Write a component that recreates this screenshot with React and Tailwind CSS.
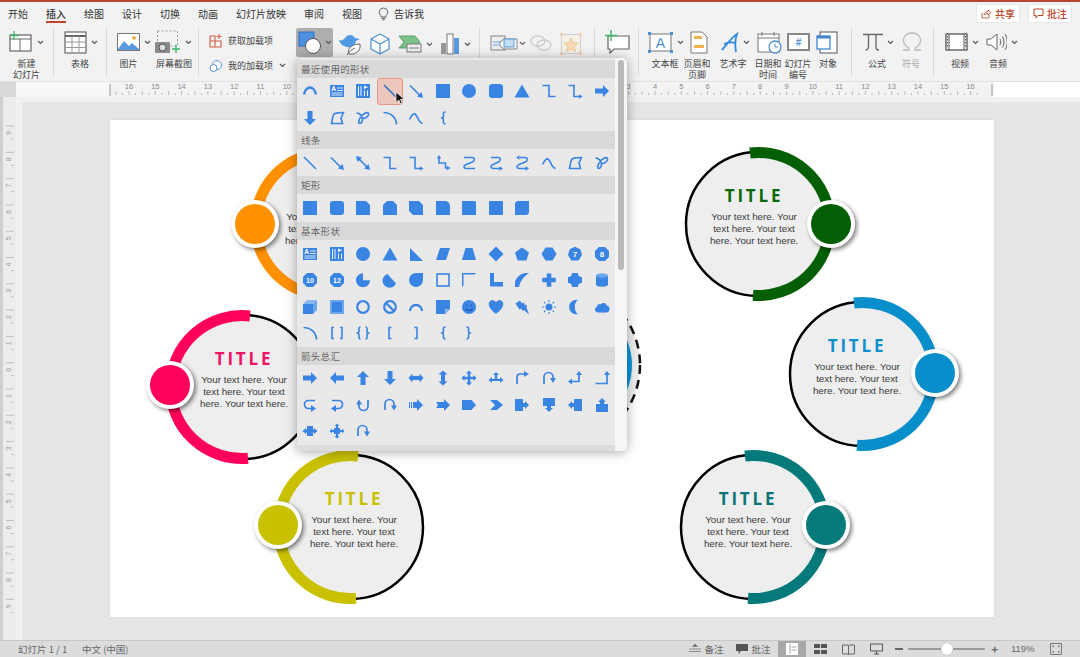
import React from 'react';

const line = (d, w = 1.3) => <path d={d} fill="none" stroke="currentColor" strokeWidth={w * 1.15} />;
const fill = (d) => <path d={d} />;
const rot = (deg, el) => <g transform={`rotate(${deg} 8 8)`}>{el}</g>;
const flipX = (el) => <g transform="matrix(-1 0 0 1 16 0)">{el}</g>;
const num = (n) => <text x="8" y="10.6" textAnchor="middle" fontSize={n.length > 1 ? 7 : 8} fontWeight="700" fill="#fff" fontFamily="Liberation Sans">{n}</text>;

const octagon = 'M5 1h6l4 4v6l-4 4H5l-4-4V5z';
const rArrow = 'M1 5.5h8V2l6 6-6 6v-3.5H1z';
const callout = 'M1 2h8v4h2V4l4 4-4 4v-2H9v4H1z';
const lrArrow = 'M.5 8l4-4.5V6h7V3.5l4 4.5-4 4.5V10h-7v2.5z';
const brace = 'M10.5 2C7.5 2 8.5 4.5 8.5 6S7.5 8 6 8c1.5 0 2.5.5 2.5 2s-1 4 2 4';
const curveHook = <>{line('M13 3.5H6.5a4 4 0 0 0 0 8H10', 1.5)}{fill('M9 8l5 3.5-5 3.5z')}</>;
const curveDown = <>{line('M3 13V7a4.5 4.5 0 0 1 9 0v2', 1.5)}{fill('M9 8.5h6l-3 5z')}</>;

const shapes = {
    arc: line('M2 11.5C3 6.5 6 4.5 8 4.5s5 2 6 7', 2),
    textH: <><rect x="1" y="2" width="14" height="12" /><path d="M8 5h6M8 7.5h6M2.5 10h11M2.5 12h11" stroke="#fff" strokeWidth="0.8" /><text x="2.2" y="8" fontSize="6.5" fontWeight="700" fill="#fff" fontFamily="Liberation Sans">A</text></>,
    textV: <><rect x="1" y="1" width="14" height="14" /><path d="M3.5 3v10M6 3v10M9.5 7.5v5.5M12.5 7.5v5.5" stroke="#fff" strokeWidth="0.9" /><path d="M9 2.5l4 1.7-4 1.7z" fill="#fff" /></>,
    line: line('M2 2l12 12', 1.4),
    arrowLine: <>{line('M2 2.5l10.5 10.5', 1.4)}{fill('M15 15l-6-1.4 4.6-4.6z')}</>,
    dblArrow: <>{line('M4 4l8 8', 1.5)}{fill('M15 15l-6-1.4 4.6-4.6z')}{fill('M1 1l6 1.4L2.4 7z')}</>,
    rect: <rect x="1" y="1" width="14" height="14" />,
    circle: <circle cx="8" cy="8" r="7" />,
    rrect: <rect x="1" y="1" width="14" height="14" rx="3" />,
    tri: fill('M8 1.5l7.5 13H.5z'),
    elbow: line('M1.5 2.5H8v11h6.5', 1.4),
    elbowArrow: <>{line('M1.5 2.5H7v11h6', 1.4)}{fill('M15.5 13.5l-3.5-2.2v4.4z')}</>,
    elbowDbl: <>{line('M4 3v5h6.5v5H13', 1.4)}{fill('M4 0l2.2 3.5H1.8z')}{fill('M15.5 13l-3.5-2.2v4.4z')}</>,
    curved: line('M3 2.5h8c3 0 3 3.5.5 4.5l-6.5 2.5C2 11 2.5 13.5 5.5 13.5H14', 1.4),
    curvedArrow: <>{line('M3 2.5h7c3 0 3 3.5.5 4.5L5 9.5C2 11 2.5 13.5 5.5 13.5H12', 1.4)}{fill('M15 13.5l-3.5-2.2v4.4z')}</>,
    curvedDbl: <>{line('M6 2.5h5c3 0 3 3.5.5 4.5L5 9.5C2 11 2.5 13.5 5.5 13.5H12', 1.4)}{fill('M15 13.5l-3.5-2.2v4.4z')}{fill('M2 2.5l3.5-2.2v4.4z')}</>,
    curve: line('M1.5 9.5C4 4.5 6 2.5 8 5s3 8 6.5 8.5', 1.4),
    freeform: line('M2.5 13.5L4 6C4.5 3 8 2.5 14.5 2.5L12 8l1.5 5.5z', 1.4),
    scribble: line('M1.5 3c3.5 0 6 3.5 6 6.5s-2.5 5-3.5 3.5S5 6 9.500 3.5s5 1 3 3-4 2.500-5.500 1.500', 1.4),
    quarter: line('M1.5 2.5c7 0 13 5 13 12', 1.5),
    lbrace: line(brace, 1.4),
    rbrace: flipX(line(brace, 1.4)),
    r1: <rect x="1" y="1" width="14" height="14" rx="1" />,
    r2: <rect x="1" y="1" width="14" height="14" rx="2" />,
    snip1: fill('M1 1h10l4 4v10H1z'),
    snip2: fill('M5 1h6l4 4v10H1V5z'),
    snipD: fill('M1 1h10l4 4v10H5l-4-4z'),
    round1: fill('M1 1h9a5 5 0 0 1 5 5v9H1z'),
    round2: fill('M1 1h13l1 1v13H1z'),
    roundD: fill('M3 1h12v12l-2 2H1V3z'),
    rtTri: fill('M2 2l13 13H2z'),
    parallel: fill('M5 2h10l-4 12H1z'),
    trap: fill('M4.5 2h7L15 14H1z'),
    diamond: fill('M8 .5L15.5 8 8 15.5.5 8z'),
    pentagon: fill('M8 1.5l7 5-2.6 8H3.6L1 6.5z'),
    hexagon: fill('M4.5 1.5h7L15.5 8l-4 6.5h-7L.5 8z'),
    hept: <>{fill('M8 .8l5.3 2.5 1.7 5.6-3.4 5.6H4.4L1 8.9l1.7-5.6z')}{num('7')}</>,
    oct: <>{fill(octagon)}{num('8')}</>,
    dec: <>{fill(octagon)}{num('10')}</>,
    dodec: <>{fill(octagon)}{num('12')}</>,
    pie: fill('M8 1.2A7 7 0 1 0 15 8.2H8z'),
    chord: fill('M5.5 2L14 11.5A7 7 0 1 1 5.5 2z'),
    tear: fill('M15 1v7a7 7 0 1 1-7-7z'),
    frame: <rect x="2" y="2" width="12" height="12" fill="none" stroke="currentColor" strokeWidth="1.6" />,
    halfFrame: fill('M1 1h14l-1.5 1.5H2.5v11L1 15z'),
    lShape: fill('M2 1h4v9h9v4.5H2z'),
    stripe: fill('M1 15V9.5C3 5 6 2 11 1h4C9 5 6 10 5 15z'),
    plus: fill('M5.7 1.5h4.6v4.2h4.5v4.6h-4.5v4.5H5.7v-4.5H1.2V5.7h4.5z'),
    plaque: fill('M5 1h6a4 4 0 0 0 4 4v6a4 4 0 0 0-4 4H5a4 4 0 0 0-4-4V5a4 4 0 0 0 4-4z'),
    can: <>{fill('M2 3.5h12v9c0 3-12 3-12 0z')}<ellipse cx="8" cy="3.5" rx="6" ry="2.2" fill="#6ea6ea" /></>,
    cube: <>{fill('M1 5h10v10H1z')}<path d="M1 5l4-4h10l-4 4z" fill="#8ab6ef" /><path d="M11 5l4-4v10l-4 4z" fill="#6ea6ea" /></>,
    bevel: <><rect x="1" y="1" width="14" height="14" fill="#6ea6ea" /><rect x="3" y="3" width="10" height="10" /></>,
    donut: <circle cx="8" cy="8" r="5.8" fill="none" stroke="currentColor" strokeWidth="2.2" />,
    noSym: <><circle cx="8" cy="8" r="5.8" fill="none" stroke="currentColor" strokeWidth="2.2" />{line('M4 4l8 8', 2)}</>,
    blockArc: line('M2 12a6 6 0 0 1 12 0', 2),
    fold: <>{fill('M1 1h14v9l-5 5H1z')}<path d="M15 10h-5v5z" fill="#8ab6ef" /></>,
    smiley: <><circle cx="8" cy="8" r="7" /><path d="M5.5 5.5v1.5M10.5 5.5v1.5M4.5 10c2 2 5 2 7 0" fill="none" stroke="#1c56a3" strokeWidth="1.1" /></>,
    heart: fill('M8 15C3 11 .8 8 .8 5a3.8 3.8 0 0 1 7.2-1.7A3.8 3.8 0 0 1 15.2 5c0 3-2.2 6-7.2 10z'),
    bolt: fill('M1.5 4.5L6 1.5l2 3 2-1 1 3 2-1-.5 3 2.5 7-5-4.5-1.5 1-1-2.5-2 1z'),
    sun: <><circle cx="8" cy="8" r="3.5" />{line('M8 1v2M8 13v2M1 8h2M13 8h2M3 3l1.4 1.4M11.6 11.6L13 13M13 3l-1.4 1.4M4.4 11.6L3 13', 1)}</>,
    moon: fill('M11 1a7.2 7.2 0 1 0 0 14C7 13 6.5 3 11 1z'),
    cloud: fill('M3.8 13.5A3 3 0 0 1 2.8 7.7a3 3 0 0 1 4-2.5 3.5 3.5 0 0 1 6 1.3 3.6 3.6 0 0 1 0 7z'),
    brackets: line('M5 2.5H3v11h2M11 2.5h2v11h-2', 1.4),
    braces: line('M5.5 2C3.5 2 4 4.5 4 6S3 8 1.5 8C3 8 4 8.5 4 10s-.5 4 1.5 4M10.5 2c2 0 1.5 2.5 1.5 4s1 2 2.5 2c-1.5 0-2.5.5-2.5 2s.5 4-1.5 4', 1.4),
    lbracket: line('M9.5 2.5H7v11h2.5', 1.4),
    rbracket: line('M6.5 2.5H9v11H6.5', 1.4),
    aRight: fill(rArrow),
    aLeft: rot(180, fill(rArrow)),
    aUp: rot(270, fill(rArrow)),
    aDown: rot(90, fill(rArrow)),
    aLR: fill(lrArrow),
    aUD: rot(90, fill(lrArrow)),
    aQuad: fill('M8 .5l3 3H9.2v3.3h3.3V5l3 3-3 3V9.2H9.2v3.3H11l-3 3-3-3h1.8V9.2H3.5V11l-3-3 3-3v1.8h3.3V3.5H5z'),
    aLRU: fill('M8 2l3 3H9.2v4H12V7l3.5 3-3.500 3v-2H4v2L.5 10 4 7v2h2.800V5H5z'),
    aBent: <>{line('M3 14V7c0-2 1-3 3-3h5', 1.5)}{fill('M10 1l5 3-5 3z')}</>,
    aUturn: <>{line('M3 14V7a4.5 4.5 0 0 1 9 0v2', 1.5)}{fill('M9 8h6l-3 5z')}</>,
    aLeftUp: <>{line('M12 4v7.5H4', 1.5)}{fill('M9 5l3-4 3 4z')}{fill('M5 8.5L1 11.5l4 3z')}</>,
    aBentUp: <>{line('M1.5 13.5H13V4', 1.5)}{fill('M10 5l3-4 3 4z')}</>,
    hookR: curveHook,
    hookL: flipX(curveHook),
    hookU: rot(180, curveDown),
    hookD: curveDown,
    striped: fill('M1 5h1v6H1zM3 5h1v6H3zM5 5h4V2l6 6-6 6v-3H5z'),
    notched: fill('M1 5h8V2l6 6-6 6v-3H1l2-3z'),
    home: fill('M1 3h9.5L15 8l-4.5 5H1z'),
    chevron: fill('M2 3h7l6 5-6 5H2l5-5z'),
    calloutR: fill(callout),
    calloutD: rot(90, fill(callout)),
    calloutL: rot(180, fill(callout)),
    calloutU: rot(270, fill(callout)),
    calloutLR: fill('M5 3h6v3.5h1V5l3.5 3L12 11V9.5h-1V13H5V9.5H4V11L.5 8 4 5v1.5h1z'),
    calloutQ: fill('M8 .5L10.5 3H9v2h2v2h2V5.5L15.5 8 13 10.5V9h-2v2H9v2h1.5L8 15.5 5.5 13H7v-2H5V9H3v1.5L.5 8 3 5.5V7h2V5h2V3H5.5z'),
    circular: curveDown,
};

const sections = [
    { title: '最近使用的形状', pad: '', items: ['arc', 'textH', 'textV', 'line', 'arrowLine', 'rect', 'circle', 'rrect', 'tri', 'elbow', 'elbowArrow', 'aRight', 'aDown', 'freeform', 'scribble', 'quarter', 'curve', 'lbrace'] },
    { title: '线条', pad: 'pt-[0.5px]', items: ['line', 'arrowLine', 'dblArrow', 'elbow', 'elbowArrow', 'elbowDbl', 'curved', 'curvedArrow', 'curvedDbl', 'curve', 'freeform', 'scribble'] },
    { title: '矩形', pad: 'pt-[1px] pb-[0.5px]', items: ['rect', 'rrect', 'snip1', 'snip2', 'snipD', 'round1', 'round2', 'r1', 'roundD'] },
    { title: '基本形状', pad: 'pt-[0.5px] pb-[0.5px]', items: ['textH', 'textV', 'circle', 'tri', 'rtTri', 'parallel', 'trap', 'diamond', 'pentagon', 'hexagon', 'hept', 'oct', 'dec', 'dodec', 'pie', 'chord', 'tear', 'frame', 'halfFrame', 'lShape', 'stripe', 'plus', 'plaque', 'can', 'cube', 'bevel', 'donut', 'noSym', 'blockArc', 'fold', 'smiley', 'heart', 'bolt', 'sun', 'moon', 'cloud', 'quarter', 'brackets', 'braces', 'lbracket', 'rbracket', 'lbrace', 'rbrace'] },
    { title: '箭头总汇', pad: '', items: ['aRight', 'aLeft', 'aUp', 'aDown', 'aLR', 'aUD', 'aQuad', 'aLRU', 'aBent', 'aUturn', 'aLeftUp', 'aBentUp', 'hookR', 'hookL', 'hookU', 'hookD', 'striped', 'notched', 'home', 'chevron', 'calloutR', 'calloutD', 'calloutL', 'calloutU', 'calloutLR', 'calloutQ', 'circular'] },
];

const tabs = ['开始', '插入', '绘图', '设计', '切换', '动画', '幻灯片放映', '审阅', '视图'];

const nodes = [
    { pos: 'left-[128px] top-[14px]', side: 'left', color: '#ff9000', title: 'text-[#ff9000]', knob: 'top-[66px]', text: 'left-[31px]' },
    { pos: 'left-[558px] top-[14px]', side: 'right', color: '#045f04', title: 'text-[#0a6a0a]', knob: 'top-[66px]', text: 'left-[26px]' },
    { pos: 'left-[43px] top-[177px]', side: 'left', color: '#ff005a', title: 'text-[#f01464]', knob: 'top-[64px]', text: 'left-[31px]' },
    { pos: 'left-[662px] top-[164px]', side: 'right', color: '#078ecb', title: 'text-[#0d8fc9]', knob: 'top-[65px]', text: 'left-[25px]' },
    { pos: 'left-[151px] top-[317px]', side: 'left', color: '#c9c100', title: 'text-[#c9c100]', knob: 'top-[64px]', text: 'left-[33px]' },
    { pos: 'left-[553px] top-[317px]', side: 'right', color: '#06797b', title: 'text-[#0a7477]', knob: 'top-[64px]', text: 'left-[25px]' },
];

const Chevron = ({ className = 'ml-[4px]' }) => (
    <svg width="7" height="5" viewBox="0 0 7 5" className={`shrink-0 ${className}`}>
        <path d="M1 1l2.5 2.5L6 1" fill="none" stroke="#555" strokeWidth="1.2" />
    </svg>
);

const Sep = () => <div className="w-px h-[48px] mt-[2px] bg-[#d9d9d9] shrink-0" />;

const Icon = ({ w = 24, h = 24, children }) => (
    <svg width={w} height={h} viewBox={`0 0 ${w} ${h}`} className="shrink-0">{children}</svg>
);

const Item = ({ width, pad, icon, chevron, label = [], gray }) => (
    <div className={`flex flex-col shrink-0 ${width}`}>
        <div className={`h-[32px] flex items-center ${pad}`}>
            {icon}
            {chevron && <Chevron />}
        </div>
        <div className={`text-center text-[9px] leading-[11px] whitespace-nowrap ${gray ? 'text-[#aaa]' : 'text-[#444]'}`}>
            {label.map((l) => <div key={l}>{l}</div>)}
        </div>
    </div>
);

const Ribbon = () => (
    <div className="h-[57px] pt-px flex bg-[#f2f2f2] border-b border-[#e2e2e2]">
        <Item width="w-[53px]" pad="pl-[9px]" chevron label={['新建', '幻灯片']} icon={
            <Icon w={24} h={24}>
                <rect x="1" y="5" width="21" height="16" fill="#fff" stroke="#666" strokeWidth="1.2" />
                <path d="M1 9h21M11 9v12" stroke="#666" strokeWidth="1" />
                <path d="M5 1v9M1 5.5h9" stroke="#3fb56a" strokeWidth="1.3" />
            </Icon>
        } />
        <Sep />
        <Item width="w-[52px]" pad="pl-[10px]" chevron label={['表格']} icon={
            <Icon w={23} h={23}>
                <rect x="1" y="1" width="21" height="21" fill="#fff" stroke="#666" strokeWidth="1.2" />
                <path d="M1 5h21" stroke="#666" strokeWidth="2" />
                <path d="M1 11h21M1 16.5h21M8 5v17M15 5v17" stroke="#999" strokeWidth="1" />
            </Icon>
        } />
        <Sep />
        <Item width="w-[43px]" pad="pl-[10px]" chevron label={['图片']} icon={
            <Icon w={23} h={18}>
                <rect x=".5" y=".5" width="22" height="17" fill="#fff" stroke="#777" />
                <path d="M1 16l6-8 5 5 3-3 7 6v1H1z" fill="#5a9be0" />
                <circle cx="17" cy="5" r="1.8" fill="#f0a030" />
            </Icon>
        } />
        <Item width="w-[48px]" pad="pl-[5px]" chevron label={['屏幕截图']} icon={
            <Icon w={26} h={24}>
                <rect x="2.5" y="1" width="20" height="15" fill="none" stroke="#999" strokeDasharray="2 2" />
                <rect x="0" y="12" width="15" height="11" rx="1" fill="#8a8a8a" />
                <circle cx="7.5" cy="17.5" r="3.5" fill="#ddd" stroke="#555" />
                <path d="M21 15v8M17 19h8" stroke="#3fb56a" strokeWidth="1.4" />
            </Icon>
        } />
        <Sep />
        <div className="w-[88px] shrink-0 flex flex-col pl-[10px] text-[9px] text-[#444]">
            <div className="h-[25px] mt-[2px] flex items-center gap-[6px]">
                <Icon w={13} h={14}>
                    <path d="M1 2h5v5H1zM1 7h5v6H1zM6 7h6v6H6z" fill="none" stroke="#d0603f" strokeWidth="1.1" />
                    <path d="M10 0v5M7.5 2.5h5" stroke="#d0603f" strokeWidth="1.1" />
                </Icon>
                获取加载项
            </div>
            <div className="h-[25px] flex items-center gap-[6px]">
                <Icon w={13} h={14}>
                    <circle cx="8" cy="6" r="4.5" fill="#fff" stroke="#5b93d6" />
                    <circle cx="4.5" cy="9" r="3.5" fill="#fff" stroke="#5b93d6" />
                </Icon>
                我的加载项
                <Chevron className="ml-0" />
            </div>
        </div>
        <div className="w-[9px] shrink-0" />
        <div className="w-[37px] h-[29px] mt-[2px] shrink-0 rounded-[2px] bg-[#aeaeae] flex items-center pl-[2px]">
            <Icon w={24} h={24}>
                <rect x="1" y="1" width="15" height="14" fill="#4f90e0" stroke="#2e6fc0" />
                <circle cx="15" cy="15" r="7.5" fill="#fff" stroke="#555" />
            </Icon>
            <Chevron className="ml-[3px]" />
        </div>
        <div className="flex items-start pt-[6px] pl-[5px] shrink-0">
            <Icon w={26} h={24}>
                <path d="M1 8c3 1 4 0 6-2 2-4 8-4 10 0l5 1-4 2c-1 5-5 7-9 6-4-1-7-3-8-7z" fill="#4f9ae0" />
                <path d="M11 22c-2-5 2-10 11-10 1 6-3 11-11 10z" fill="#fff" stroke="#666" />
                <path d="M9 23c2-3 5-6 8-7" fill="none" stroke="#666" />
            </Icon>
            <div className="w-[5px]" />
            <Icon w={22} h={24}>
                <path d="M11 2l9 5v10l-9 5-9-5V7zM2 7l9 5 9-5M11 12v10" fill="#fff" stroke="#4f90cf" strokeWidth="1.2" strokeLinejoin="round" />
            </Icon>
            <div className="w-[7px]" />
            <div className="h-[24px] flex items-center">
                <Icon w={24} h={18}>
                    <path d="M1 1h16l5 6-5 6H1l5-6z" fill="#7cc08a" stroke="#5aa068" />
                    <rect x="9" y="9" width="14" height="8" fill="#eee" stroke="#777" />
                    <path d="M11 13h10" stroke="#777" />
                </Icon>
                <Chevron />
            </div>
            <div className="w-[7px]" />
            <div className="h-[24px] flex items-center">
                <Icon w={20} h={22}>
                    <rect x="1" y="10" width="5" height="11" fill="#999" />
                    <rect x="7" y="1" width="6" height="20" fill="#fff" stroke="#777" />
                    <rect x="14" y="5" width="5" height="16" fill="#5a9be0" />
                </Icon>
                <Chevron />
            </div>
        </div>
        <div className="w-[8px] shrink-0" />
        <Sep />
        <div className="flex items-start pt-[7px] pl-[10px] shrink-0 opacity-90">
            <div className="h-[20px] flex items-center">
                <Icon w={28} h={18}>
                    <rect x="1" y="2" width="14" height="14" fill="#eee" stroke="#777" />
                    <path d="M3 8h8M3 11h6" stroke="#5a9be0" />
                    <path d="M10 8l4-3h13v10H14l-4-3z" fill="#fff" stroke="#777" />
                    <rect x="14" y="5" width="10" height="8" fill="#bcdcf5" stroke="#4f90cf" />
                </Icon>
                <Chevron className="ml-[1px]" />
            </div>
            <div className="w-[4px]" />
            <div className="h-[20px] flex items-center">
                <Icon w={22} h={16}>
                    <ellipse cx="8" cy="6" rx="7" ry="5" fill="none" stroke="#ccc" strokeWidth="1.5" />
                    <ellipse cx="14" cy="10" rx="7" ry="5" fill="none" stroke="#ccc" strokeWidth="1.5" />
                </Icon>
            </div>
            <div className="w-[8px]" />
            <Icon w={22} h={22}>
                <rect x="1.5" y="1.5" width="19" height="19" fill="#f6f0e8" stroke="#ccc" />
                <path d="M11 5l2 5h5l-4 3.5 1.5 5L11 15.5l-4.500 3 1.500-5L4 10h5z" fill="#f5d9b0" stroke="#eec48e" />
                <path d="M0 0h3v3H0zM19 0h3v3h-3zM0 19h3v3H0zM19 19h3v3h-3z" fill="#f2cdb4" />
            </Icon>
        </div>
        <div className="w-[12px] shrink-0" />
        <Sep />
        <div className="pt-[4px] pl-[9px] w-[43px] shrink-0">
            <Icon w={26} h={24}>
                <path d="M4 6h21v13H10l-4 4v-4H4z" fill="#fff" stroke="#666" strokeWidth="1.2" />
                <path d="M7 0v11M1 5.5h12" stroke="#3fb56a" strokeWidth="1.4" />
            </Icon>
        </div>
        <Sep />
        <Item width="w-[52px] mr-[-9px]" pad="pl-[9px]" chevron label={['文本框']} icon={
            <Icon w={25} h={21}>
                <rect x="2" y="2" width="21" height="17" fill="#fff" stroke="#777" />
                <path d="M0 0h3v3H0zM22 0h3v3h-3zM0 18h3v3H0zM22 18h3v3h-3z" fill="#4f90cf" />
                <text x="12.5" y="15.5" textAnchor="middle" fontSize="14" fill="#4f90cf" fontFamily="Liberation Sans">A</text>
            </Icon>
        } />
        <Item width="w-[30px]" pad="pl-[8px]" label={['页眉和', '页脚']} icon={
            <Icon w={18} h={23}>
                <path d="M1 1h11l5 5v16H1z" fill="#fff" stroke="#777" />
                <path d="M4 5h8v3H4z" fill="#efb04e" />
                <path d="M4 14h10v3H4z" fill="#efb04e" />
            </Icon>
        } />
        <Item width="w-[42px]" pad="pl-[9px]" chevron label={['艺术字']} icon={
            <Icon w={18} h={21}>
                <path d="M1 18C6 12 11 5 16 2c-2 5-2 12-1 18M3 12c4-2 8-2 12-1" fill="none" stroke="#2f8be0" strokeWidth="1.8" />
            </Icon>
        } />
        <Item width="w-[28px]" pad="pl-[3px]" label={['日期和', '时间']} icon={
            <Icon w={25} h={23}>
                <rect x="1" y="3" width="21" height="18" fill="#fff" stroke="#777" />
                <path d="M1 7h21M5 1v4M17 1v4" stroke="#777" />
                <circle cx="18" cy="16" r="6" fill="#fff" stroke="#4f90cf" strokeWidth="1.3" />
                <path d="M18 12.5V16h3" fill="none" stroke="#4f90cf" />
            </Icon>
        } />
        <Item width="w-[32px]" pad="pl-[5px]" label={['幻灯片', '编号']} icon={
            <Icon w={23} h={18}>
                <rect x="1" y="1" width="21" height="16" fill="#fff" stroke="#888" strokeWidth="2" />
                <text x="11.5" y="12.5" textAnchor="middle" fontSize="10" fontWeight="700" fill="#4f90cf" fontFamily="Liberation Sans">#</text>
            </Icon>
        } />
        <Item width="w-[28px] mr-[9px]" pad="pl-[2px]" label={['对象']} icon={
            <Icon w={22} h={23}>
                <rect x="4" y="1" width="17" height="21" fill="#fff" stroke="#555" />
                <rect x="1" y="5" width="13" height="13" fill="#fff" stroke="#3f86cf" strokeWidth="1.3" />
                <path d="M1 5h13v2.5H1z" fill="#3f86cf" />
            </Icon>
        } />
        <Sep />
        <Item width="w-[50px]" pad="pl-[11px]" chevron label={['公式']} icon={
            <Icon w={20} h={20}>
                <path d="M0 2.5h20M5.5 2.5V14c0 3-1 4-3 4M13 2.500V15c0 2 1 3 3 3" fill="none" stroke="#666" strokeWidth="1.3" />
            </Icon>
        } />
        <Item width="w-[18px] mr-[13px]" pad="pl-0" gray label={['符号']} icon={
            <Icon w={20} h={20}>
                <path d="M1 18h6v-2C3 14 1.5 11 1.5 8 1.5 4 5 1 10 1s8.5 3 8.5 7c0 3-1.5 6-5.5 8v2h6" fill="none" stroke="#bbb" strokeWidth="1.3" />
            </Icon>
        } />
        <Sep />
        <Item width="w-[52px]" pad="pl-[11px]" chevron label={['视频']} icon={
            <Icon w={23} h={18}>
                <rect x="1" y="1" width="21" height="16" fill="#fff" stroke="#555" strokeWidth="1.3" />
                <path d="M4 1v16M19 1v16" stroke="#555" />
                <path d="M2.5 3v12M20.5 3v12" stroke="#555" strokeDasharray="1.5 1.5" />
            </Icon>
        } />
        <Item width="w-[24px]" pad="pl-0" chevron label={['音频']} icon={
            <Icon w={21} h={20}>
                <path d="M1 7h4l6-5v16l-6-5H1z" fill="#fff" stroke="#666" />
                <path d="M14 7c1 2 1 4 0 6M16.5 4.5c2 3 2 8 0 11M19 2c3 5 3 11 0 16" fill="none" stroke="#666" />
            </Icon>
        } />
    </div>
);

const hNumbers = [16, 15, 14, 13, 12, 11, 10, 9, 8, 7, 6, 5, 4, 3, 2, 1, 0, 1, 2, 3, 4, 5, 6, 7, 8, 9, 10, 11, 12, 13, 14, 15, 16];

const HRuler = () => (
    <div className="h-[15px] bg-white shrink-0">
        <svg width="1080" height="15" viewBox="0 0 1080 15" className="block">
            <rect x="0" y="0" width="16" height="15" fill="#d9d9d9" />
            <rect x="16" y="0" width="94" height="15" fill="#f8f8f8" />
            <rect x="110" y="0" width="884" height="15" fill="#f3f3f3" />
            <rect x="994" y="0" width="86" height="15" fill="#fff" />
            {hNumbers.map((n, i) => (
                <g key={i}>
                    <text x={129 + i * 26.3} y="7" textAnchor="middle" fontSize="7.5" fill="#888" fontFamily="Liberation Sans">{n}</text>
                    <path d={`M${116 + i * 26.3} 9v4M${122.5 + i * 26.3} 11v2M${129 + i * 26.3} 9v4M${135.5 + i * 26.3} 11v2`} stroke="#aaa" strokeWidth="0.8" />
                </g>
            ))}
            <path d="M110 2v12M992 2v12" stroke="#999" />
        </svg>
    </div>
);

const vNumbers = [9, 8, 7, 6, 5, 4, 3, 2, 1, 0, 1, 2, 3, 4, 5, 6, 7, 8, 9];

const VRuler = () => (
    <div className="w-[22px] shrink-0 bg-[#f1f1f1]">
        <svg width="22" height="543" viewBox="0 0 22 543" className="block">
            <rect x="0" y="0" width="3" height="543" fill="#cfcfcf" />
            <rect x="3" y="0" width="13" height="543" fill="#ececec" />
            {vNumbers.map((n, i) => (
                <g key={i}>
                    <text x="0" y="0" transform={`translate(11 ${36 + i * 26.3}) rotate(-90)`} textAnchor="middle" fontSize="7" fill="#999" fontFamily="Liberation Sans">{n}</text>
                    <path d={`M6 ${29 + i * 26.3}h8M11 ${42 + i * 26.3}h3`} stroke="#b5b5b5" strokeWidth="0.8" />
                </g>
            ))}
        </svg>
    </div>
);

const Node = ({ pos, side, color, title, knob, text }) => (
    <div className={`absolute w-[180px] h-[180px] ${pos}`}>
        <svg width="180" height="180" viewBox="0 0 180 180" className="absolute left-0 top-0">
            <circle cx="90" cy="90" r="72" fill="#eeeeee" stroke="#000" strokeWidth="2.5" />
            <path
                d={side === 'right' ? 'M82 19A71.5 71.5 0 1 1 85 161.3' : 'M97 19A71.5 71.5 0 1 0 95 161.3'}
                fill="none"
                stroke={color}
                strokeWidth="11"
            />
        </svg>
        <div className={`absolute ${text} top-[50px] w-[120px] text-center`}>
            <div className={`font-['Open_Sans',sans-serif] font-bold text-[17px] leading-[24px] tracking-[2.8px] ${title}`}>TITLE</div>
            <div className="mt-[3px] font-['Liberation_Sans',sans-serif] text-[9.8px] leading-[12px] text-[#3a3a3a]">
                Your text here. Your<br />text here. Your text<br />here. Your text here.
            </div>
        </div>
        <div className={`absolute w-[48px] h-[48px] rounded-full bg-white shadow-[2px_2px_4px_rgba(0,0,0,0.5)] flex items-center justify-center ${knob} ${side === 'right' ? 'left-[139px]' : 'left-[-7px]'}`}>
            <div className="w-[40px] h-[40px] rounded-full" style={{ backgroundColor: color }} />
        </div>
    </div>
);

const ShapeCell = ({ name, selected }) => (
    <div className={`w-[26.5px] h-[26.5px] flex items-center justify-center text-[#3a84e3] rounded-[3px] ${selected ? 'bg-[#ecc6ba] border border-[#e8937c]' : ''}`}>
        <svg width="16" height="16" viewBox="0 0 16 16" fill="currentColor" className={selected ? 'text-[#2f6fc8]' : ''}>{shapes[name]}</svg>
    </div>
);

const ShapesMenu = () => (
    <div className="absolute left-[297px] top-[58px] w-[330px] h-[393px] z-10 flex rounded-[5px] overflow-hidden bg-[#e9e9e9] shadow-[0_1px_12px_rgba(0,0,0,0.35)]">
        <div className="w-[318px] pt-[2px] shrink-0">
            {sections.map((s, si) => (
                <div key={s.title}>
                    <div className="h-[18px] bg-[#d9d9d9] pl-[4px] text-[9.5px] leading-[18px] text-[#666] tracking-[0.3px]">{s.title}</div>
                    <div className={`grid grid-cols-[repeat(12,26.5px)] ${s.pad}`}>
                        {s.items.map((name, i) => <ShapeCell key={i} name={name} selected={si === 0 && i === 3} />)}
                    </div>
                </div>
            ))}
            <div className="h-[7px] bg-[#dddddd]" />
        </div>
        <div className="flex-1 bg-[#f6f6f6] pt-[2px] pl-[3px]">
            <div className="w-[6px] h-[210px] rounded-full bg-[#b9b9b9]" />
        </div>
    </div>
);

const StatusBar = () => (
    <div className="h-[17px] shrink-0 flex items-center bg-[#dcdcdc] border-t border-[#c8c8c8] pl-[18px] text-[9.5px] text-[#666]">
        <span className="w-[64px]">幻灯片 1 / 1</span>
        <span>中文 (中国)</span>
        <div className="flex-1" />
        <div className="flex items-center gap-[3px]">
            <svg width="12" height="10" viewBox="0 0 12 10"><path d="M6 0l2.5 2.5h-5zM0 5h12M0 7.5h12" fill="#777" stroke="#777" strokeWidth="0.8" /></svg>
            备注
        </div>
        <div className="flex items-center gap-[3px] ml-[13px]">
            <svg width="12" height="10" viewBox="0 0 12 10"><path d="M0 0h12v7H5L2.5 10V7H0z" fill="#555" /></svg>
            批注
        </div>
        <div className="ml-[7px] w-[28px] h-[17px] bg-[#a9a9a9] flex items-center justify-center">
            <svg width="12" height="12" viewBox="0 0 12 12"><path d="M0 0h12v12H0z" fill="#fff" /><path d="M4 1v10M5.5 4h5M5.5 7h5" stroke="#a9a9a9" /></svg>
        </div>
        <div className="ml-px w-[28px] flex justify-center">
            <svg width="13" height="10" viewBox="0 0 13 10"><path d="M0 0h6v4H0zM7 0h6v4H7zM0 6h6v4H0zM7 6h6v4H7z" fill="#555" /></svg>
        </div>
        <div className="w-[28px] flex justify-center">
            <svg width="13" height="11" viewBox="0 0 13 11"><path d="M.5 1H6l.5.5L7 1h5.5v9H7l-.5.5L6 10H.5zM6.5 1.5v9" fill="none" stroke="#666" /></svg>
        </div>
        <div className="w-[28px] flex justify-center">
            <svg width="13" height="12" viewBox="0 0 13 12"><path d="M.5 1h12v7H.5zM6.5 8v3M4 11h5" fill="none" stroke="#555" /></svg>
        </div>
        <div className="ml-[4px] w-[8px] h-[1.5px] bg-[#666]" />
        <div className="ml-[5px] w-[77px] h-[2px] rounded-full bg-[#999] relative">
            <div className="absolute left-[33px] top-[-5px] w-[12px] h-[12px] rounded-full bg-white shadow-[0_0_1px_rgba(0,0,0,0.4)]" />
        </div>
        <div className="ml-[7px] font-bold text-[11px] leading-none text-[#666]">+</div>
        <div className="ml-[13px] w-[24px] font-['Liberation_Sans',sans-serif] text-[#666]">119%</div>
        <div className="ml-[15px] mr-[18px]">
            <svg width="12" height="12" viewBox="0 0 12 12"><path d="M.5.5h11v11H.5z" fill="none" stroke="#777" /><path d="M2 2l2.5 1L3 4.5zM10 2L9 4.5 7.5 3zM2 10l1-2.5L4.5 9zM10 10L7.5 9 9 7.500z" fill="#777" /></svg>
        </div>
    </div>
);

const App = () => (
    <div className="relative w-[1080px] h-[657px] overflow-hidden flex flex-col bg-[#e6e6e6] font-['Noto_Sans_CJK_SC',sans-serif]">
        <div className="h-[2px] bg-[#b5482e] shrink-0" />
        <div className="h-[23px] shrink-0 bg-[#f2f2f2] flex items-center pl-[8px] pr-[8px] text-[10px] text-[#333] gap-[18px]">
            {tabs.map((t) => (
                <div key={t} className={`relative h-[23px] leading-[23px] ${t === '插入' ? 'font-medium' : ''}`}>
                    {t}
                    {t === '插入' && <div className="absolute left-0 right-0 bottom-[2px] h-[2px] bg-[#c0432a]" />}
                </div>
            ))}
            <div className="flex items-center gap-[5px] ml-[-2px]">
                <svg width="11" height="14" viewBox="0 0 11 14"><path d="M5.500 1A4.300 4.300 0 0 0 3 8.800V10h5V8.800A4.300 4.300 0 0 0 5.500 1zM3.500 11.500h4M4.500 13h2" fill="none" stroke="#666" /></svg>
                告诉我
            </div>
            <div className="flex-1" />
            <div className="w-[44px] h-[19px] bg-white rounded-[2px] border border-[#e8e8e8] flex items-center justify-center gap-[4px] text-[#c0432a] font-medium">
                <svg width="10" height="10" viewBox="0 0 10 10"><path d="M1 4v5h7V6M3 6c0-2 2-3.500 4-3.500V1l3 2.500L7 6V4.500C5 4.500 4 5 3 6z" fill="none" stroke="#c0432a" strokeWidth="0.8" /></svg>
                共享
            </div>
            <div className="w-[44px] h-[19px] bg-white rounded-[2px] border border-[#e8e8e8] flex items-center justify-center gap-[3px] text-[#c0432a] font-medium ml-[-10px]">
                <svg width="11" height="11" viewBox="0 0 11 11"><path d="M1 1h9v6.500H5L3 10V7.500H1z" fill="none" stroke="#c0432a" /></svg>
                批注
            </div>
        </div>
        <Ribbon />
        <HRuler />
        <div className="flex-1 flex min-h-0">
            <VRuler />
            <div className="flex-1 pl-[88px] pt-[23px] bg-[#e6e6e6] border-t-[5px] border-[#f1f1f1]">
                <div className="relative mt-[-5px] w-[884px] h-[497px] bg-white shadow-[0_0_3px_rgba(0,0,0,0.08)]">
                    <svg width="884" height="497" viewBox="0 0 884 497" className="absolute left-0 top-0">
                        <circle cx="447" cy="245" r="83" fill="#eee" stroke="#111" strokeWidth="2.5" strokeDasharray="9 6" />
                        <circle cx="457" cy="245" r="65" fill="#0a95d8" />
                    </svg>
                    {nodes.map((n, i) => <Node key={i} {...n} />)}
                </div>
            </div>
        </div>
        <StatusBar />
        <ShapesMenu />
        <svg width="12" height="15" viewBox="0 0 12 15" className="absolute left-[395px] top-[91px] z-20">
            <path d="M1 1v10.500l2.800-2.500 1.800 4 1.700-.8-1.800-3.900h3.800z" fill="#111" stroke="#fff" strokeWidth="0.7" />
        </svg>
    </div>
);

export default App;
